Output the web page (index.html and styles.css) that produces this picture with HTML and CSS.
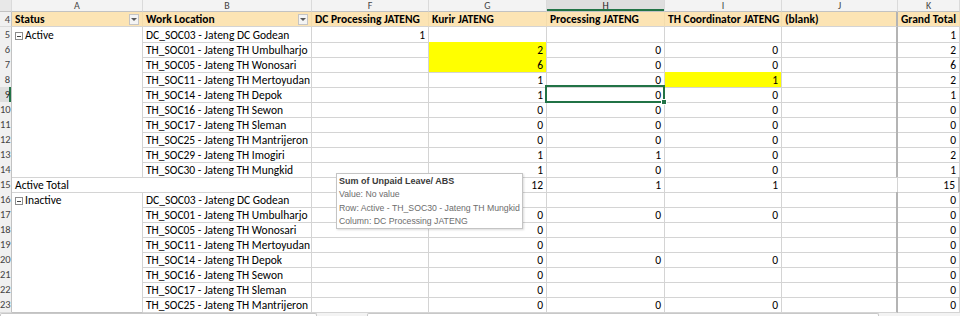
FILE: index.html
```html
<!DOCTYPE html>
<html>
<head>
    <title>Unpaid Leave Pivot</title>
    <link rel="stylesheet" href="styles.css">
</head>
<body>

<div class="sheet">
    <div class="row cols">
        <div class="corner"></div>
        <div>A</div><div>B</div><div>F</div><div>G</div><div class="on">H</div><div>I</div><div>J</div><div>K</div>
    </div>

    <div class="row head">
        <div class="rn">4</div>
        <div class="c">Status<span class="filter"></span></div>
        <div class="c">Work Location<span class="filter"></span></div>
        <div class="c">DC Processing JATENG</div>
        <div class="c">Kurir JATENG</div>
        <div class="c">Processing JATENG</div>
        <div class="c">TH Coordinator JATENG</div>
        <div class="c">(blank)</div>
        <div class="c">Grand Total</div>
    </div>

    <div class="row">
        <div class="rn">5</div>
        <div class="grp"><span class="tog"></span>Active</div>
        <div>DC_SOC03 - Jateng DC Godean</div>
        <div class="n">1</div><div></div><div></div><div></div><div></div><div class="n">1</div>
    </div>
    <div class="row">
        <div class="rn">6</div>
        <div class="grp"></div>
        <div>TH_SOC01 - Jateng TH Umbulharjo</div>
        <div></div><div class="n yel top">2</div><div class="n">0</div><div class="n">0</div><div></div><div class="n">2</div>
    </div>
    <div class="row">
        <div class="rn">7</div>
        <div class="grp"></div>
        <div>TH_SOC05 - Jateng TH Wonosari</div>
        <div></div><div class="n yel">6</div><div class="n">0</div><div class="n">0</div><div></div><div class="n">6</div>
    </div>
    <div class="row">
        <div class="rn">8</div>
        <div class="grp"></div>
        <div>TH_SOC11 - Jateng TH Mertoyudan</div>
        <div></div><div class="n">1</div><div class="n">0</div><div class="n yel">1</div><div></div><div class="n">2</div>
    </div>
    <div class="row">
        <div class="rn on">9</div>
        <div class="grp"></div>
        <div>TH_SOC14 - Jateng TH Depok</div>
        <div></div><div class="n">1</div><div class="n sel">0</div><div class="n">0</div><div></div><div class="n">1</div>
    </div>
    <div class="row">
        <div class="rn">10</div>
        <div class="grp"></div>
        <div>TH_SOC16 - Jateng TH Sewon</div>
        <div></div><div class="n">0</div><div class="n">0</div><div class="n">0</div><div></div><div class="n">0</div>
    </div>
    <div class="row">
        <div class="rn">11</div>
        <div class="grp"></div>
        <div>TH_SOC17 - Jateng TH Sleman</div>
        <div></div><div class="n">0</div><div class="n">0</div><div class="n">0</div><div></div><div class="n">0</div>
    </div>
    <div class="row">
        <div class="rn">12</div>
        <div class="grp"></div>
        <div>TH_SOC25 - Jateng TH Mantrijeron</div>
        <div></div><div class="n">0</div><div class="n">0</div><div class="n">0</div><div></div><div class="n">0</div>
    </div>
    <div class="row">
        <div class="rn">13</div>
        <div class="grp"></div>
        <div>TH_SOC29 - Jateng TH Imogiri</div>
        <div></div><div class="n">1</div><div class="n">1</div><div class="n">0</div><div></div><div class="n">2</div>
    </div>
    <div class="row">
        <div class="rn">14</div>
        <div></div>
        <div>TH_SOC30 - Jateng TH Mungkid</div>
        <div></div><div class="n">1</div><div class="n">0</div><div class="n">0</div><div></div><div class="n">1</div>
    </div>
    <div class="row">
        <div class="rn">15</div>
        <div class="tot">Active Total</div>
        <div></div><div class="n">12</div><div class="n">1</div><div class="n">1</div><div></div><div class="n">15</div>
    </div>

    <div class="row">
        <div class="rn">16</div>
        <div class="grp"><span class="tog"></span>Inactive</div>
        <div>DC_SOC03 - Jateng DC Godean</div>
        <div></div><div></div><div></div><div></div><div></div><div class="n">0</div>
    </div>
    <div class="row">
        <div class="rn">17</div>
        <div class="grp"></div>
        <div>TH_SOC01 - Jateng TH Umbulharjo</div>
        <div></div><div class="n">0</div><div class="n">0</div><div class="n">0</div><div></div><div class="n">0</div>
    </div>
    <div class="row">
        <div class="rn">18</div>
        <div class="grp"></div>
        <div>TH_SOC05 - Jateng TH Wonosari</div>
        <div></div><div class="n">0</div><div></div><div></div><div></div><div class="n">0</div>
    </div>
    <div class="row">
        <div class="rn">19</div>
        <div class="grp"></div>
        <div>TH_SOC11 - Jateng TH Mertoyudan</div>
        <div></div><div class="n">0</div><div></div><div></div><div></div><div class="n">0</div>
    </div>
    <div class="row">
        <div class="rn">20</div>
        <div class="grp"></div>
        <div>TH_SOC14 - Jateng TH Depok</div>
        <div></div><div class="n">0</div><div class="n">0</div><div class="n">0</div><div></div><div class="n">0</div>
    </div>
    <div class="row">
        <div class="rn">21</div>
        <div class="grp"></div>
        <div>TH_SOC16 - Jateng TH Sewon</div>
        <div></div><div class="n">0</div><div></div><div></div><div></div><div class="n">0</div>
    </div>
    <div class="row">
        <div class="rn">22</div>
        <div class="grp"></div>
        <div>TH_SOC17 - Jateng TH Sleman</div>
        <div></div><div class="n">0</div><div></div><div></div><div></div><div class="n">0</div>
    </div>
    <div class="row">
        <div class="rn">23</div>
        <div class="grp"></div>
        <div>TH_SOC25 - Jateng TH Mantrijeron</div>
        <div></div><div class="n">0</div><div class="n">0</div><div class="n">0</div><div></div><div class="n">0</div>
    </div>

    <div class="foot">
        <span class="bar"></span>
        <span class="bar wide"></span>
    </div>

    <!-- hover tooltip over F14 -->
    <div class="tip">
        <b>Sum of Unpaid Leave/ ABS</b><br>
        Value: No value<br>
        Row: Active - TH_SOC30 - Jateng TH Mungkid<br>
        Column: DC Processing JATENG
    </div>
</div>

</body>
</html>
```

FILE: styles.css
```css
body {
    margin: 0;
    font-family: Carlito, "Liberation Sans", sans-serif;
    font-size: 11.5px;
    color: #000;
    background: #fff;
}

.sheet {
    position: relative;
    width: 960px;
    height: 316px;
    overflow: hidden;
}

.row {
    display: grid;
    grid-template-columns: 12px 131px 169px 117px 118px 118px 117px 116px 62px;
    height: 15px;
}

.row > div {
    box-sizing: border-box;
    border-right: 1px solid #d4d4d4;
    border-bottom: 1px solid #d4d4d4;
    padding: 1px 3px 0;
    line-height: 14px;
    white-space: nowrap;
}

/* column J has the heavier line before the grand total */
.row:not(.cols) > div:nth-child(8) {
    border-right: 2px solid #b4b4b4;
}

.cols {
    height: 12px;
    background: #f3f3f3;
}

.cols > div {
    padding: 0;
    text-align: center;
    font-size: 10px;
    line-height: 11px;
    color: #444;
    border-right-color: #dadada;
    border-bottom-color: #c2c2c2;
}

.cols > div.on {
    background: #dedede;
    color: #262626;
    box-shadow: inset 0 -2px 0 #217346;
}

.corner {
    background: #e8e8e8;
}

.row > .rn {
    overflow: hidden;
    background: #f0f0f0;
    color: #444;
    font-size: 10.5px;
    text-align: right;
    padding: 1px 1px 0 0;
    border-right-color: #c2c2c2;
    border-bottom-color: #dadada;
}

.row > .rn.on {
    background: #dedede;
    color: #262626;
    box-shadow: inset -2px 0 0 #217346;
}

.head > .c {
    display: flex;
    justify-content: space-between;
    align-items: center;
    padding-top: 0;
    background: #fce4b4;
    font-size: 11.5px;
    font-weight: bold;
    border-right-color: #f3dcad;
}

.filter {
    display: flex;
    align-items: center;
    justify-content: center;
    width: 10px;
    height: 11px;
    box-sizing: border-box;
    border: 1px solid #c4c4c4;
    background: #f4f4f4;
}

.filter:after {
    content: "";
    border-left: 3px solid transparent;
    border-right: 3px solid transparent;
    border-top: 3px solid #595959;
}

.row > .grp {
    border-bottom-color: transparent;
}

.tog {
    display: inline-block;
    width: 8px;
    height: 8px;
    box-sizing: border-box;
    margin-right: 2px;
    vertical-align: -1px;
    border: 1px solid #8c8c8c;
    background: linear-gradient(#444, #444) center / 4px 1px no-repeat;
}

.tot {
    grid-column: span 2;
}

.row > .n {
    text-align: right;
}

.row > .yel {
    background: #ffff00;
}

.row > .yel.top {
    border-bottom-color: #ffff00;
}

.row > .sel {
    position: relative;
}

.sel:after {
    content: "";
    position: absolute;
    left: -2px;
    top: -2px;
    right: -1px;
    bottom: -1px;
    border: 2px solid #217346;
}

.sel:before {
    content: "";
    position: absolute;
    right: -3px;
    bottom: -3px;
    width: 4px;
    height: 4px;
    background: #217346;
    border: 1px solid #fff;
    z-index: 1;
}

.foot {
    display: flex;
    gap: 50px;
    height: 4px;
    border-top: 1px solid #c2c2c2;
    background: #f3f3f3;
}

.bar {
    width: 315px;
    border: 1px solid #c8c8c8;
    border-bottom: none;
    border-radius: 2px 2px 0 0;
    background: #fff;
}

.bar.wide {
    width: 510px;
}

.tip {
    position: absolute;
    left: 336px;
    top: 173px;
    width: 187px;
    height: 56px;
    box-sizing: border-box;
    padding: 1px 2px;
    border: 1px solid #c4c4c4;
    background: #fff;
    box-shadow: 1px 1px 2px rgba(0, 0, 0, .15);
    font-family: "Liberation Sans", sans-serif;
    font-size: 8.7px;
    line-height: 13.3px;
    color: #6d6d6d;
    white-space: nowrap;
}

.tip b {
    font-size: 9px;
    color: #3a3a3a;
}
```
